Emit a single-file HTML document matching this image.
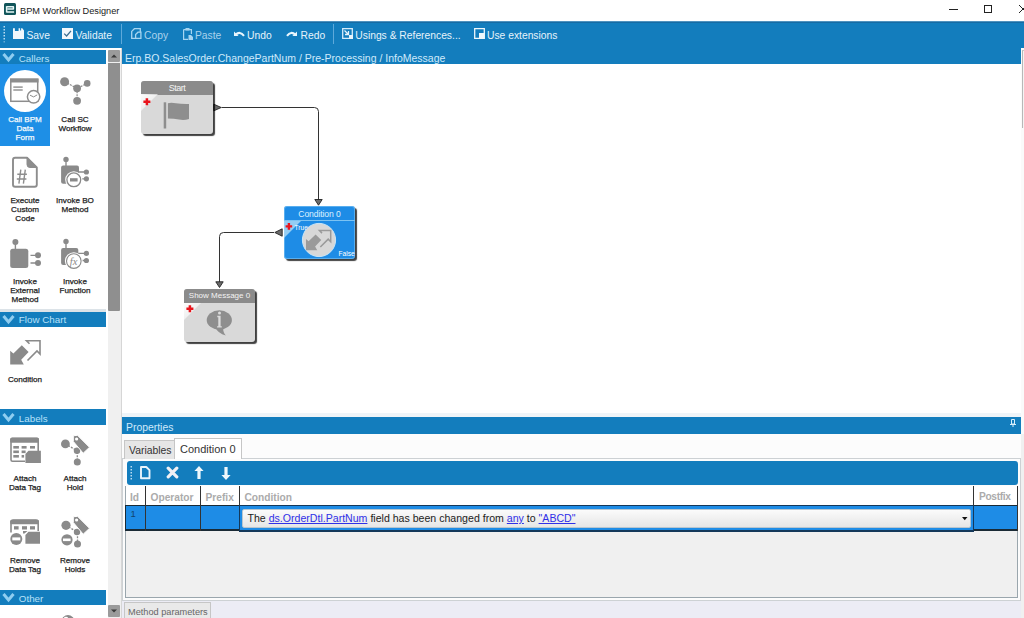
<!DOCTYPE html>
<html><head><meta charset="utf-8">
<style>
*{margin:0;padding:0;box-sizing:border-box}
html,body{width:1024px;height:618px;overflow:hidden;background:#fff;font-family:"Liberation Sans",sans-serif;position:relative}
.a{position:absolute}
.tb{position:absolute;top:29px;font-size:10.3px;color:#e6f3fb;white-space:nowrap;line-height:14px}
.tbd{color:#a9d2ec}
.hdr{position:absolute;left:0;width:106px;height:15px;background:#137dbd}
.hdr span{position:absolute;left:18.8px;top:1.9px;font-size:9.8px;line-height:13px;color:#b8e2fa}
.hdr svg{position:absolute;left:2px;top:2px}
.lbl{position:absolute;font-size:8.1px;line-height:9px;color:#222;-webkit-text-stroke:.25px currentColor;text-align:center;white-space:nowrap}
.node{position:absolute;border-radius:3px;box-shadow:2px 2px 1px rgba(0,0,0,.75)}
.nh{position:absolute;left:0;top:0;right:0;height:14px;border-radius:3px 3px 0 0;font-size:8px;line-height:14px;text-align:center;color:#f4f4f4;white-space:nowrap}
</style></head><body>

<!-- ===== title bar ===== -->
<div class="a" style="left:4px;top:3px;width:12px;height:12px;background:#11555a;border-radius:1.5px"></div>
<svg class="a" style="left:4px;top:3px" width="12" height="12" viewBox="0 0 12 12"><path d="M2.6 3.8H9.4V6H3.5 M2.6 3.2V9.2 M2.3 8.9H10.1" fill="none" stroke="#e6f6f6" stroke-width="1.5" stroke-linejoin="round"/></svg>
<div class="a" style="left:20px;top:5px;font-size:9.2px;line-height:12px;color:#1a1a1a;white-space:nowrap">BPM Workflow Designer</div>
<div class="a" style="left:949px;top:9px;width:9px;height:1px;background:#222"></div>
<div class="a" style="left:984px;top:5px;width:8px;height:8px;border:1px solid #222"></div>
<svg class="a" style="left:1018px;top:4px" width="10" height="10"><path d="M1 1L9 9M9 1L1 9" stroke="#222" stroke-width="1"/></svg>

<!-- ===== toolbar ===== -->
<div class="a" style="left:0;top:21px;width:1024px;height:27px;background:#137dbd;border-top:1px solid #4f92bf"></div>
<div class="a" style="left:0;top:22px;width:1024px;height:1px;background:#176ba3"></div>
<svg class="a" style="left:3px;top:25px" width="3" height="19"><g fill="#b9dcf2"><rect x="0.5" y="1" width="1.5" height="1.5"/><rect x="0.5" y="4" width="1.5" height="1.5"/><rect x="0.5" y="7" width="1.5" height="1.5"/><rect x="0.5" y="10" width="1.5" height="1.5"/><rect x="0.5" y="13" width="1.5" height="1.5"/><rect x="0.5" y="16" width="1.5" height="1.5" fill-opacity=".5"/></g></svg>
<svg class="a" style="left:13px;top:28px" width="11" height="11"><path d="M0 .3H1.9V3H5.6V.3H7.1V2.5H8.1V.3H9.3L11 2.5V11.3H0Z" fill="#f0f7fc"/></svg>
<div class="tb" style="left:26.5px">Save</div>
<svg class="a" style="left:62px;top:28px" width="11" height="11"><rect x="0" y="0" width="11" height="11" fill="#f3f8fc"/><path d="M2.2 5.6L4.6 8L9 2.8" fill="none" stroke="#3c6f93" stroke-width="1.3"/></svg>
<div class="tb" style="left:75.5px">Validate</div>
<div class="a" style="left:121px;top:24px;width:1px;height:20px;background:#5ea9da"></div>
<svg class="a" style="left:131px;top:28px" width="11" height="12"><path d="M4 10.4H.7V3.4L3.4.7H9.3V4.2" fill="none" stroke="#a6d5f1" stroke-width="1.3"/><path d="M4.6 10.4V6.6L7 4.2H9.9V10.4Z" fill="none" stroke="#a6d5f1" stroke-width="1.3"/></svg>
<div class="tb tbd" style="left:144px">Copy</div>
<svg class="a" style="left:183px;top:28px" width="10" height="12"><path d="M.6 1.6H8.4V6 M.6 1.6V11.4H5" fill="none" stroke="#a6d5f1" stroke-width="1.2"/><rect x="2.5" y="0" width="4" height="2.5" fill="#a6d5f1"/><path d="M5.5 7H8L10 9V12H5.5Z" fill="#a6d5f1"/></svg>
<div class="tb tbd" style="left:195px">Paste</div>
<svg class="a" style="left:233px;top:30px" width="12" height="7"><path d="M2.5 4.8Q7 .6 11 5.8" fill="none" stroke="#eaf6fd" stroke-width="2.1"/><path d="M1 1.6V6H5.6Z" fill="#eaf6fd"/></svg>
<div class="tb" style="left:247px">Undo</div>
<svg class="a" style="left:286px;top:30px" width="12" height="7"><path d="M9.5 4.8Q5 .6 1 5.8" fill="none" stroke="#eaf6fd" stroke-width="2.1"/><path d="M11 1.6V6H6.4Z" fill="#eaf6fd"/></svg>
<div class="tb" style="left:300.5px">Redo</div>
<div class="a" style="left:333px;top:24px;width:1px;height:20px;background:#5ea9da"></div>
<svg class="a" style="left:342px;top:28px" width="11" height="11"><path d="M.7 .7H10.3V10.3H.7Z" fill="none" stroke="#d6ecfa" stroke-width="1.3"/><path d="M2.5 2.5L6.5 6.5M3 6.5H6.5V3" fill="none" stroke="#e6f3fb" stroke-width="1.3"/><rect x="7" y="7" width="4" height="4" fill="#e6f3fb"/></svg>
<div class="tb" style="left:355.3px">Usings &amp; References...</div>
<svg class="a" style="left:474px;top:28px" width="11" height="11"><path d="M.7 .7H10.3V10.3H.7Z" fill="none" stroke="#eef7fc" stroke-width="1.3"/><rect x="5" y="5" width="5.5" height="5.5" fill="#eef7fc"/></svg>
<div class="tb" style="left:487px">Use extensions</div>

<!-- ===== left panel ===== -->
<div class="a" style="left:0;top:48px;width:122px;height:570px;background:#fff"></div>
<div class="a" style="left:108px;top:50px;width:13px;height:568px;background:#f0f0f0"></div>
<div class="a" style="left:121px;top:48px;width:1px;height:570px;background:#d6d6d6"></div>
<div class="a" style="left:108px;top:50px;width:12px;height:12px;background:#9b9b9b;border-radius:1px"></div>
<svg class="a" style="left:108px;top:50px" width="12" height="12"><path d="M3 7.5H9L6 4.5Z" fill="#3a3a3a"/></svg>
<div class="a" style="left:108px;top:63px;width:12px;height:248px;background:#8f8f8f;border-radius:0 0 1px 1px"></div>
<div class="a" style="left:108px;top:605px;width:12px;height:12px;background:#9b9b9b;border-radius:1px"></div>
<svg class="a" style="left:108px;top:605px" width="12" height="12"><path d="M3 4.5H9L6 7.5Z" fill="#3a3a3a"/></svg>

<!-- Callers -->
<div class="hdr" style="top:50px;height:14px"><svg width="13" height="11"><path d="M1.5 2L6.5 8L11.5 2" fill="none" stroke="#8fcdf0" stroke-width="3"/></svg><span>Callers</span></div>
<div class="a" style="left:0;top:64px;width:50px;height:82px;background:#1e8fe6"></div>
<div class="a" style="left:4px;top:70px;width:42px;height:42px;border-radius:50%;background:#fff"></div>
<svg class="a" style="left:0;top:64px" width="50" height="50">
 <rect x="10.8" y="15.3" width="26.9" height="22" fill="none" stroke="#8d8d8d" stroke-width="1.5"/>
 <rect x="10" y="14.5" width="28.5" height="4" fill="#8d8d8d"/>
 <rect x="13.3" y="22.4" width="9.4" height="1.4" fill="#8d8d8d"/><rect x="13.3" y="25.3" width="9.4" height="1.4" fill="#8d8d8d"/>
 <circle cx="33.6" cy="32.8" r="6.2" fill="#fff" stroke="#8d8d8d" stroke-width="1.5"/>
 <path d="M30 31.2L33.6 32.9L37.2 30.9" fill="none" stroke="#8d8d8d" stroke-width="1"/>
</svg>
<div class="lbl" style="left:0;width:50px;top:115px;color:#f4f9fd">Call BPM<br>Data<br>Form</div>
<svg class="a" style="left:50px;top:64px" width="50" height="50" fill="#8a8a8a" stroke="#8a8a8a">
 <path d="M14.6 17.8L27.1 24.3L37.2 19.4M27.1 24.3V36.8" stroke-width="1.2" stroke-dasharray="2 1" fill="none"/>
 <circle cx="14.6" cy="17.8" r="4.5" stroke="none"/><circle cx="27.1" cy="24.3" r="3.9" stroke="none"/><circle cx="37.2" cy="19.4" r="3.3" stroke="none"/><circle cx="27.1" cy="36.8" r="3.9" stroke="none"/>
</svg>
<div class="lbl" style="left:50px;width:50px;top:115px">Call SC<br>Workflow</div>

<svg class="a" style="left:0;top:150px" width="50" height="42">
 <path d="M27 7.8H15.1Q13 7.8 13 9.9V34.7Q13 36.7 15.1 36.7H34.7Q36.8 36.7 36.8 34.7V17.5Z" fill="none" stroke="#8d8d8d" stroke-width="1.9" stroke-linejoin="round"/>
 <path d="M27 7.8V14.5Q27 17.5 30 17.5H36.8Z" fill="#8d8d8d" stroke="#8d8d8d" stroke-width="1" stroke-linejoin="round"/>
 <path d="M20.8 19.6L18.9 33.6M25.3 19.6L23.4 33.6M17.3 24.2H26.9M16.8 29H26.4" stroke="#8d8d8d" stroke-width="1.4" fill="none"/>
</svg>
<div class="lbl" style="left:0;width:50px;top:196px">Execute<br>Custom<br>Code</div>
<svg class="a" style="left:50px;top:150px" width="50" height="42" fill="#8a8a8a">
 <circle cx="16" cy="9.4" r="2.7"/><rect x="15.3" y="9.4" width="1.4" height="7"/>
 <rect x="11.1" y="15.5" width="17.9" height="18.2" rx="2"/>
 <path d="M28 22H34M28 28.8H34" stroke="#8a8a8a" stroke-width="1.3"/>
 <circle cx="36.4" cy="22" r="2.6"/><circle cx="36.4" cy="28.8" r="2.6"/>
 <circle cx="23.8" cy="29.8" r="8.6" fill="#fff"/>
 <circle cx="23.8" cy="29.8" r="6.9" fill="#fff" stroke="#8a8a8a" stroke-width="1.3"/>
 <rect x="20" y="28.2" width="7.6" height="3.3" fill="#8a8a8a"/>
</svg>
<div class="lbl" style="left:50px;width:50px;top:196px">Invoke BO<br>Method</div>

<svg class="a" style="left:0;top:232px" width="50" height="42" fill="#8a8a8a">
 <circle cx="15.4" cy="10" r="3"/><rect x="14.7" y="10" width="1.4" height="7"/>
 <rect x="10.2" y="16.8" width="18.1" height="19.1" rx="2.5"/>
 <path d="M30.5 23.3H36M30.5 31H36" stroke="#8a8a8a" stroke-width="1.3"/>
 <circle cx="38" cy="23.3" r="3"/><circle cx="38" cy="31" r="3"/>
</svg>
<div class="lbl" style="left:0;width:50px;top:277px">Invoke<br>External<br>Method</div>
<svg class="a" style="left:50px;top:232px" width="50" height="42" fill="#8a8a8a">
 <circle cx="16" cy="9.4" r="2.7"/><rect x="15.3" y="9.4" width="1.4" height="7"/>
 <rect x="11.1" y="15.9" width="17.2" height="17.1" rx="2"/>
 <path d="M28 21.4H34M28 28.5H34" stroke="#8a8a8a" stroke-width="1.3"/>
 <circle cx="36.4" cy="21.4" r="2.6"/><circle cx="36.4" cy="28.5" r="2.6"/>
 <circle cx="23.8" cy="29.1" r="8.9" fill="#fff"/>
 <circle cx="23.8" cy="29.1" r="7.3" fill="#fff" stroke="#8a8a8a" stroke-width="1.1"/>
 <text x="23.6" y="33" font-family="Liberation Serif" font-size="10.5" font-style="italic" fill="#8a8a8a" text-anchor="middle">fx</text>
</svg>
<div class="lbl" style="left:50px;width:50px;top:277px">Invoke<br>Function</div>

<!-- Flow Chart -->
<div class="a" style="left:0;top:309px;width:106px;height:3px;background:#dce3e8"></div>
<div class="hdr" style="top:312px"><svg width="13" height="11"><path d="M1.5 2L6.5 8L11.5 2" fill="none" stroke="#8fcdf0" stroke-width="3"/></svg><span style="top:1.4px">Flow Chart</span></div>
<svg class="a" style="left:0;top:332px" width="50" height="40">
 <path d="M10.2 32.4V18.8L13.4 21.4L21.8 13.3L28.6 20.1L21.2 27.8L23.8 32.4Z" fill="#8a8a8a"/>
 <path d="M27.5 28.5L37 19L40 22V8.7H26.5L29.5 11.7" fill="none" stroke="#8a8a8a" stroke-width="1.6"/>
</svg>
<div class="lbl" style="left:0;width:50px;top:375px">Condition</div>

<!-- Labels -->
<div class="hdr" style="top:409px;height:16px"><svg width="13" height="11" style="top:3px"><path d="M1.5 2L6.5 8L11.5 2" fill="none" stroke="#8fcdf0" stroke-width="3"/></svg><span style="top:2.6px">Labels</span></div>
<svg class="a" style="left:0;top:430px" width="50" height="40" fill="#8a8a8a">
 <path d="M25 31.2H12.5Q11 31.2 11 29.7V9.5Q11 8.2 12.3 8.2H36.9Q38.2 8.2 38.2 9.5V21" fill="none" stroke="#8a8a8a" stroke-width="1.6"/>
 <rect x="10.2" y="7.8" width="28.8" height="5" rx="1.5"/>
 <rect x="13.3" y="16" width="5.6" height="2.6"/><rect x="21.6" y="16" width="5" height="2.6"/><rect x="30" y="16" width="5" height="2.6"/>
 <rect x="13.3" y="20.5" width="5.6" height="2.6"/><rect x="21.6" y="20.5" width="4" height="2.6"/>
 <rect x="13.3" y="25" width="5.6" height="2.6"/><rect x="21.6" y="25" width="2.5" height="2.6"/>
 <path d="M28.5 20.7H40.9V33H25.4V24Z"/>
</svg>
<div class="lbl" style="left:0;width:50px;top:474px">Attach<br>Data Tag</div>
<svg class="a" style="left:50px;top:430px" width="50" height="40" fill="#8a8a8a">
 <path d="M15.4 13.9L27 20.7M27.3 22V32" stroke="#8a8a8a" stroke-width="1.3" stroke-dasharray="2 1.2"/>
 <circle cx="15.4" cy="13.9" r="4.4"/><circle cx="27" cy="20.7" r="3.2"/><circle cx="27.3" cy="32" r="3.5"/>
 <path d="M23.3 5.8L27.5 5.3L39.5 17.3L33.2 23.2L23.3 11.5Z" stroke="#fff" stroke-width="1"/>
 <circle cx="26.6" cy="9" r="1.6" fill="#fff"/>
</svg>
<div class="lbl" style="left:50px;width:50px;top:474px">Attach<br>Hold</div>

<svg class="a" style="left:0;top:512px" width="50" height="40" fill="#8a8a8a">
 <path d="M11 20.5V10.5Q11 8 13.5 8H35.7Q38.2 8 38.2 10.5V19" fill="none" stroke="#8a8a8a" stroke-width="1.6"/>
 <rect x="10.2" y="7.8" width="28.8" height="4.4" rx="1.5"/>
 <rect x="14" y="14.2" width="4.6" height="3.3"/><rect x="22" y="14.2" width="5" height="3.3"/><rect x="30" y="14.2" width="5" height="3.3"/>
 <path d="M23 19H27.5L24.5 21.4H23Z"/>
 <path d="M28.5 19.7H40V31.7H25.4V23Z"/>
 <circle cx="16.3" cy="26.9" r="6"/><rect x="12.3" y="25.4" width="8" height="3" fill="#fff"/>
</svg>
<div class="lbl" style="left:0;width:50px;top:556px">Remove<br>Data Tag</div>
<svg class="a" style="left:50px;top:512px" width="50" height="40" fill="#8a8a8a">
 <path d="M16 13.3L27 20M27.5 21V32" stroke="#8a8a8a" stroke-width="1.3" stroke-dasharray="2 1.2"/>
 <circle cx="16" cy="13.3" r="4.6"/><circle cx="27" cy="20" r="3.2"/><circle cx="27.5" cy="32" r="3.5"/>
 <path d="M23.3 4.8L27.5 4.3L39.5 16.3L33.2 22.2L23.3 10.5Z" stroke="#fff" stroke-width="1"/>
 <circle cx="26.6" cy="8" r="1.6" fill="#fff"/>
 <circle cx="17" cy="27.8" r="5.6"/><rect x="13" y="26.5" width="7.6" height="2.6" fill="#fff"/>
</svg>
<div class="lbl" style="left:50px;width:50px;top:556px">Remove<br>Holds</div>

<!-- Other -->
<div class="hdr" style="top:589.5px;height:15px"><svg width="13" height="11"><path d="M1.5 2L6.5 8L11.5 2" fill="none" stroke="#8fcdf0" stroke-width="3"/></svg><span style="top:2.1px">Other</span></div>
<svg class="a" style="left:60px;top:613px" width="16" height="5"><circle cx="8" cy="8.5" r="6.5" fill="#8a8a8a"/><ellipse cx="6" cy="5" rx="2" ry="1.2" fill="#fff"/></svg>

<!-- ===== breadcrumb / canvas ===== -->
<div class="a" style="left:122px;top:48px;width:899px;height:16px;background:#137dbd"></div>
<div class="tb" style="left:125px;top:51px;color:#cfeafb;font-size:10.5px">Erp.BO.SalesOrder.ChangePartNum / Pre-Processing / InfoMessage</div>

<div class="a" style="left:1021px;top:48px;width:3px;height:570px;background:#fafafa"></div>
<div class="a" style="left:1022px;top:50px;width:2px;height:78px;background:#f4f4f4;border-left:1px solid #b8b8b8;border-top:1px solid #c8c8c8"></div>

<!-- connectors -->
<svg class="a" style="left:122px;top:64px" width="899" height="351">
 <path d="M99.5 43.5H192.5Q196.5 43.5 196.5 47.5V136" fill="none" stroke="#333" stroke-width="1"/>
 <path d="M192.8 135.5H200.2L196.5 141.2Z" fill="#6a6a6a" stroke="#222" stroke-width=".9" stroke-linejoin="round"/>
 <path d="M152 168.5H101.5Q97.5 168.5 97.5 172.5V218" fill="none" stroke="#333" stroke-width="1"/>
 <path d="M93.8 217.8H101.2L97.5 223.5Z" fill="#6a6a6a" stroke="#222" stroke-width=".9" stroke-linejoin="round"/>
 <path d="M91.8 40.2L99.2 43.5L91.8 46.8Z" fill="#6a6a6a" stroke="#222" stroke-width=".9" stroke-linejoin="round"/>
 <path d="M160.2 164.8L152.8 168.5L160.2 172.2Z" fill="#6a6a6a" stroke="#222" stroke-width=".9" stroke-linejoin="round"/>
</svg>

<!-- Start node -->
<div class="node" style="left:141px;top:81px;width:72px;height:53px;background:#d9d9d9">
 <div class="nh" style="background:#8b8b8b;height:14px;line-height:14.5px;font-size:9px;letter-spacing:-.5px">Start</div>
 <svg class="a" style="left:0;top:13px" width="72" height="40">
  <defs><linearGradient id="g1" x1="0" y1="0" x2="1" y2="1"><stop offset="0" stop-color="#fff" stop-opacity=".95"/><stop offset=".5" stop-color="#fff" stop-opacity=".6"/><stop offset="1" stop-color="#fff" stop-opacity="0"/></linearGradient></defs>
  <path d="M0 0H17L0 17Z" fill="url(#g1)"/>
  <path d="M2.4 7.8H9.4M5.9 4.3V11.3" stroke="#e8141c" stroke-width="2.5"/>
  <rect x="22.7" y="8.3" width="2.5" height="26.2" fill="#8e8e8e"/>
  <path d="M26.9 9.2Q30 8.2 35 9.2T48 10V25Q43 26.5 38 25.5T26.9 24.5Z" fill="#8e8e8e"/>
 </svg>
</div>

<!-- Condition node -->
<div class="node" style="left:284px;top:206px;width:71px;height:53px;background:#1e8ce6;box-shadow:2px 2px 1px rgba(0,0,0,.75),inset 0 0 0 1px rgba(160,215,250,.45)">
 <div class="nh" style="height:14px;line-height:16px;font-size:8.6px;letter-spacing:-.1px;color:#dcf1ff">Condition 0</div>
 <div class="a" style="left:0;top:14px;width:71px;height:1px;background:#7cc3f3"></div>
 <svg class="a" style="left:0;top:15px" width="71" height="38">
  <path d="M0 0H17L0 17Z" fill="#a9d8f6" fill-opacity=".85"/>
  <path d="M1.6 5.4H8.2M4.9 2.1V8.7" stroke="#e8141c" stroke-width="2.4"/>
  <text x="10.5" y="9.2" font-family="Liberation Sans" font-size="6.6" fill="#fff">True</text>
  <circle cx="35" cy="19" r="16.6" fill="#d8d8d8" stroke="#c9e6f8" stroke-width="1"/>
  <g transform="translate(13.5 2.4) scale(.83)"><path d="M10.2 32.4V18.8L13.4 21.4L21.8 13.3L28.6 20.1L21.2 27.8L23.8 32.4Z" fill="#9a9a9a"/>
  <path d="M27.5 28.5L37 19L40 22V8.7H26.5L29.5 11.7" fill="none" stroke="#9a9a9a" stroke-width="1.8"/></g>
  <text x="54.5" y="35" font-family="Liberation Sans" font-size="6.6" fill="#fff">False</text>
 </svg>
</div>

<!-- Show Message node -->
<div class="node" style="left:184px;top:289px;width:71px;height:53px;background:#d9d9d9">
 <div class="nh" style="background:#8b8b8b;height:14px;line-height:14px;font-size:8px">Show Message 0</div>
 <svg class="a" style="left:0;top:14px" width="71" height="39">
  <path d="M0 0H17L0 17Z" fill="url(#g1)"/>
  <path d="M2.4 5.8H9.4M5.9 2.3V9.3" stroke="#e8141c" stroke-width="2.5"/>
  <ellipse cx="35.3" cy="17" rx="12.6" ry="9.7" fill="#8e8e8e"/>
  <path d="M31 24Q34 30.5 41.8 32.6Q38.5 28.5 39.5 24.5Z" fill="#8e8e8e"/>
  <circle cx="35.5" cy="10" r="1.5" fill="#dcdcdc"/>
  <path d="M33.3 12.8H36.6V23.2H37.8V24.6H33.1V23.2H34.3V14.2H33.3Z" fill="#dcdcdc"/>
 </svg>
</div>

<!-- ===== properties ===== -->
<div class="a" style="left:122px;top:413px;width:899px;height:4px;background:#eff4f8"></div>
<div class="a" style="left:122px;top:417px;width:899px;height:17px;background:#137dbd"></div>
<div class="a" style="left:126px;top:420.5px;font-size:10.4px;line-height:13px;color:#cfeafb">Properties</div>
<div class="a" style="left:122px;top:434px;width:902px;height:184px;background:#f0f0f0"></div>
<div class="a" style="left:122px;top:434px;width:899px;height:24px;background:#fcfcfc"></div>
<svg class="a" style="left:1010px;top:419px" width="6" height="8"><path d="M1.5 .5H4.5V5H1.5Z" fill="none" stroke="#d8eefb" stroke-width="1"/><path d="M0 5.5H6" stroke="#d8eefb" stroke-width="1"/><path d="M3 6V8" stroke="#d8eefb" stroke-width="1"/></svg>
<!-- panel border -->
<div class="a" style="left:122px;top:600px;width:899px;height:18px;background:#ececf5"></div>
<div class="a" style="left:122px;top:458px;width:899px;height:143px;border:1px solid #cdd1d4;background:#fcfcfc"></div>
<div class="a" style="left:125px;top:486px;width:893px;height:112px;border:1px solid #9aa6ad;border-top:none;background:#f0f0f0"></div>
<!-- tabs -->
<div class="a" style="left:124px;top:440px;width:51px;height:19px;background:#e6e6e6;border:1px solid #c6c6c6;border-bottom:none;font-size:10.4px;line-height:19px;color:#333;padding-left:4px">Variables</div>
<div class="a" style="left:174px;top:438px;width:68px;height:21px;background:#fff;border:1px solid #c6c6c6;border-bottom:none;font-size:11px;line-height:21px;color:#333;padding-left:5px">Condition 0</div>
<!-- inner toolbar -->
<div class="a" style="left:127px;top:461px;width:891px;height:24px;background:#137dbd;border-radius:3px"></div>
<svg class="a" style="left:130px;top:465px" width="3" height="17"><g fill="#b9dcf2"><rect x="0.5" y="1" width="1.5" height="1.5"/><rect x="0.5" y="4" width="1.5" height="1.5"/><rect x="0.5" y="7" width="1.5" height="1.5"/><rect x="0.5" y="10" width="1.5" height="1.5"/><rect x="0.5" y="13" width="1.5" height="1.5"/></g></svg>
<svg class="a" style="left:140px;top:465.5px" width="11" height="14"><path d="M1 1H6.3L9.5 4.2V12.3H1Z" fill="none" stroke="#e8f4fc" stroke-width="1.9" stroke-linejoin="round"/></svg>
<svg class="a" style="left:166px;top:466px" width="13" height="13"><path d="M2.2 2.2L10.8 10.8M10.8 2.2L2.2 10.8" stroke="#f0f0f4" stroke-width="3.2" stroke-linecap="round"/></svg>
<svg class="a" style="left:194px;top:466px" width="10" height="14"><path d="M5 0L9.6 5H6.6V13H3.4V5H.4Z" fill="#eef7fc"/></svg>
<svg class="a" style="left:221px;top:466px" width="10" height="14"><path d="M5 14L9.6 9H6.6V1H3.4V9H.4Z" fill="#eef7fc"/></svg>
<!-- grid -->
<div class="a" style="left:125px;top:486px;width:893px;height:19px;background:#fff;border-left:1px solid #9aa6ad"></div>
<div class="a" style="left:125px;top:505px;width:893px;height:26px;background:#1e8ce6;border-top:1px solid #1a2a35;border-bottom:2px solid #1a2a35;border-left:1px solid #1a2a35"></div>
<div class="a" style="left:145px;top:486px;width:1px;height:45px;background:#333"></div>
<div class="a" style="left:200px;top:486px;width:1px;height:45px;background:#333"></div>
<div class="a" style="left:238.5px;top:486px;width:1px;height:45px;background:#333"></div>
<div class="a" style="left:973px;top:486px;width:1px;height:45px;background:#333"></div>
<div class="a" style="left:1017px;top:486px;width:1px;height:45px;background:#333"></div>
<div class="a" style="left:130px;top:492px;font-size:10.2px;font-weight:bold;line-height:12px;color:#ababab">Id</div>
<div class="a" style="left:150.5px;top:492px;font-size:10.2px;font-weight:bold;line-height:12px;color:#ababab">Operator</div>
<div class="a" style="left:205.5px;top:492px;font-size:10.2px;font-weight:bold;line-height:12px;color:#ababab">Prefix</div>
<div class="a" style="left:244.5px;top:492px;font-size:10.2px;font-weight:bold;line-height:12px;color:#ababab">Condition</div>
<div class="a" style="left:979px;top:491px;font-size:10.2px;letter-spacing:-.35px;font-weight:bold;line-height:12px;color:#ababab">Postfix</div>
<div class="a" style="left:130.5px;top:508px;font-size:9.5px;line-height:11px;color:#11446e">1</div>
<!-- combobox -->
<div class="a" style="left:239px;top:505px;width:735px;height:27px;border:1px solid #14385a;border-bottom-width:2px;background:#1e8ce6"></div>
<div class="a" style="left:242px;top:508.5px;width:728.5px;height:19.5px;border:1px solid #b9c6cf;border-radius:2px;background:linear-gradient(#fbfbfb,#e6e6e6)"></div>
<div class="a" style="left:247.5px;top:512px;font-size:10.58px;line-height:13px;color:#222;white-space:nowrap">The <u style="color:#3030e8">ds.OrderDtl.PartNum</u> field has been changed from <u style="color:#3030e8">any</u> to <u style="color:#3030e8">"ABCD"</u></div>
<svg class="a" style="left:961.5px;top:517px" width="6" height="4"><path d="M0 0H5.5L2.75 3.3Z" fill="#111"/></svg>
<!-- bottom tab -->
<div class="a" style="left:124px;top:602px;width:87px;height:16px;background:#e9e9e9;border:1px solid #c6c6c6;border-bottom:none;font-size:9.2px;line-height:18px;color:#666;padding-left:3px;white-space:nowrap">Method parameters</div>

</body></html>
